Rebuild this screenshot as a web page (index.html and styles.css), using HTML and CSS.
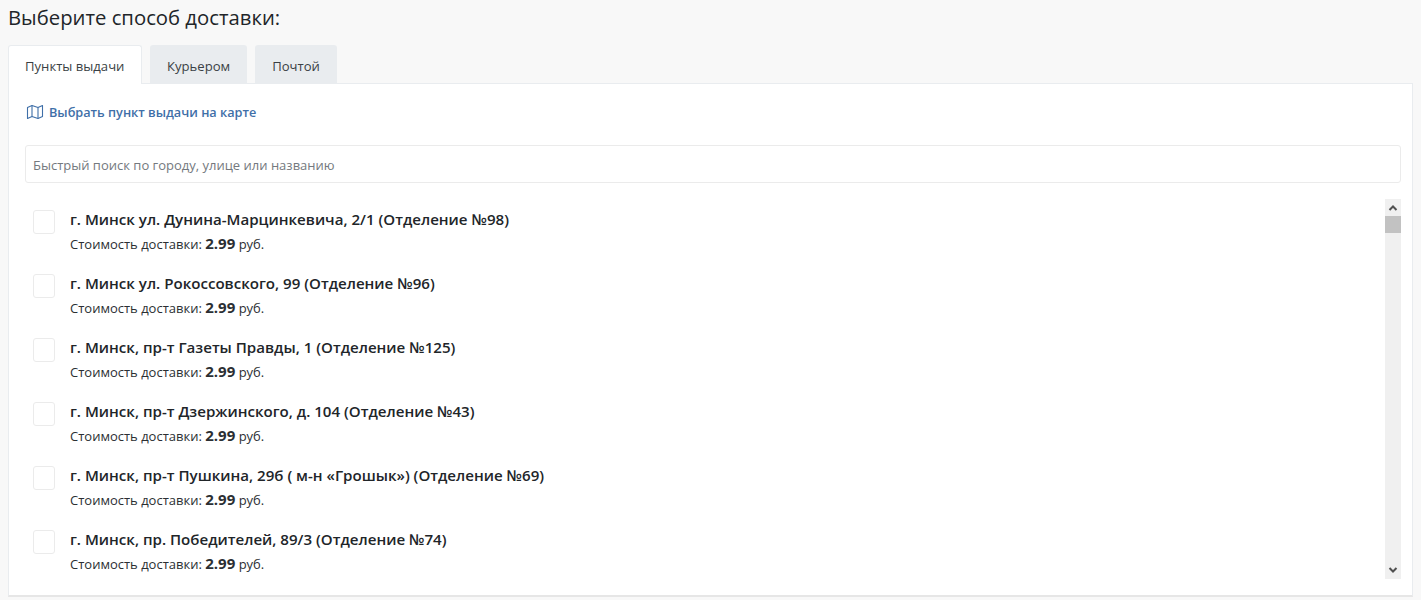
FILE: index.html
```html
<!DOCTYPE html>
<html lang="ru">
<head>
<meta charset="utf-8">
<title>Выберите способ доставки</title>
<link rel="stylesheet" href="styles.css">
</head>
<body>
<h1 class="title">Выберите способ доставки:</h1>
<div class="tabs">
  <div class="tab tab-active">Пункты выдачи</div>
  <div class="tab">Курьером</div>
  <div class="tab">Почтой</div>
</div>
<div class="panel">
  <a class="map-link" href="#">
    <svg class="map-icon" width="18" height="16" viewBox="0 0 18 16" fill="none" stroke="#3f6fa8" stroke-width="1.1" stroke-linejoin="round"><path d="M1.5 3.5 6 1.5l6 2 4.5-2v11L12 14.5l-6-2-4.500 2z"/><path d="M6 1.500v11M12 3.500v11"/></svg>
    <span>Выбрать пункт выдачи на карте</span>
  </a>
  <input class="search" type="text" placeholder="Быстрый поиск по городу, улице или названию">
  <div class="list-wrap">
    <ul class="list">
      <li class="item"><span class="check"></span><div><div class="name">г. Минск ул. Дунина-Марцинкевича, 2/1 (Отделение №98)</div><div class="cost">Стоимость доставки: <b>2.99</b> руб.</div></div></li>
      <li class="item"><span class="check"></span><div><div class="name">г. Минск ул. Рокоссовского, 99 (Отделение №96)</div><div class="cost">Стоимость доставки: <b>2.99</b> руб.</div></div></li>
      <li class="item"><span class="check"></span><div><div class="name">г. Минск, пр-т Газеты Правды, 1 (Отделение №125)</div><div class="cost">Стоимость доставки: <b>2.99</b> руб.</div></div></li>
      <li class="item"><span class="check"></span><div><div class="name">г. Минск, пр-т Дзержинского, д. 104 (Отделение №43)</div><div class="cost">Стоимость доставки: <b>2.99</b> руб.</div></div></li>
      <li class="item"><span class="check"></span><div><div class="name">г. Минск, пр-т Пушкина, 29б ( м-н «Грошык») (Отделение №69)</div><div class="cost">Стоимость доставки: <b>2.99</b> руб.</div></div></li>
      <li class="item"><span class="check"></span><div><div class="name">г. Минск, пр. Победителей, 89/3 (Отделение №74)</div><div class="cost">Стоимость доставки: <b>2.99</b> руб.</div></div></li>
    </ul>
    <div class="scrollbar">
      <svg class="arrow" width="16" height="17" viewBox="0 0 16 17" fill="none" stroke="#505050" stroke-width="2"><path d="M4.500 11l3.500-3.500 3.500 3.500"/></svg>
      <div class="thumb"></div>
      <div class="track"></div>
      <svg class="arrow" width="16" height="17" viewBox="0 0 16 17" fill="none" stroke="#505050" stroke-width="2"><path d="M4.500 6l3.500 3.500 3.500-3.500"/></svg>
    </div>
  </div>
</div>
</body>
</html>
```
FILE: styles.css
```css
* { box-sizing: border-box; }
html, body { height: 600px; overflow: hidden; }
body {
  margin: 0;
  padding: 0 8px;
  background: #f8f8f8;
  color: #212529;
  font-family: "Open Sans", "Noto Sans", sans-serif;
}
.title {
  margin: 0;
  height: 45px;
  padding-top: 3px;
  font-size: 20.3px;
  line-height: 28px;
  font-weight: 400;
}
.tabs {
  display: flex;
  gap: 8px;
  height: 39px;
  position: relative;
  z-index: 1;
}
.tab {
  height: 38px;
  padding: 0 17px;
  background: #e9ecef;
  border-radius: 3px 3px 0 0;
  font-size: 13.1px;
  line-height: 43px;
  color: #3a3f44;
}
.tab-active {
  width: 134px;
  height: 39px;
  background: #fff;
  border: 1px solid #e9ecef;
  border-bottom: 0;
  padding: 0 16px;
  line-height: 41px;
  white-space: nowrap;
}
.panel {
  height: 514px;
  margin-top: -1px;
  padding: 16px 11px 0 16px;
  background: #fff;
  border: 1px solid #e9ecef;
  border-bottom: 2px solid #e6e6e6;
}
.map-link {
  display: flex;
  align-items: center;
  gap: 5px;
  height: 24px;
  margin-left: 1px;
  color: #3f6fa8;
  font-size: 12.7px;
  font-weight: 600;
  text-decoration: none;
}
.search {
  display: block;
  width: 100%;
  height: 38px;
  margin-top: 21px;
  padding: 1px 7px 0;
  border: 1px solid #ebebeb;
  border-radius: 3px;
  font: 13px "Open Sans", "Noto Sans", sans-serif;
  color: #495057;
  background: #fff;
}
.search::placeholder { color: #74797e; opacity: 1; }
.list-wrap {
  display: flex;
  justify-content: space-between;
  margin-top: 16px;
  height: 380px;
}
.list { list-style: none; margin: 0; padding: 0; overflow: hidden; flex: 1; }
.item {
  display: flex;
  height: 64px;
  padding: 9px 0 0 8px;
  gap: 15px;
}
.check {
  flex: none;
  width: 22px;
  height: 24px;
  margin-top: 2px;
  border: 1px solid #ebebeb;
  border-radius: 3px;
  background: #fff;
}
.name { font-size: 15.1px; font-weight: 600; line-height: 22px; color: #212529; }
.cost { font-size: 13px; line-height: 22px; margin-top: 2px; color: #2b2f33; }
.cost b { font-size: 15px; font-weight: 700; }
.scrollbar {
  flex: none;
  width: 16px;
  height: 380px;
  display: flex;
  flex-direction: column;
  background: #f0f0f0;
}
.arrow { display: block; flex: none; }
.thumb { height: 17px; flex: none; background: #c2c2c2; }
.track { flex: 1; }
```
